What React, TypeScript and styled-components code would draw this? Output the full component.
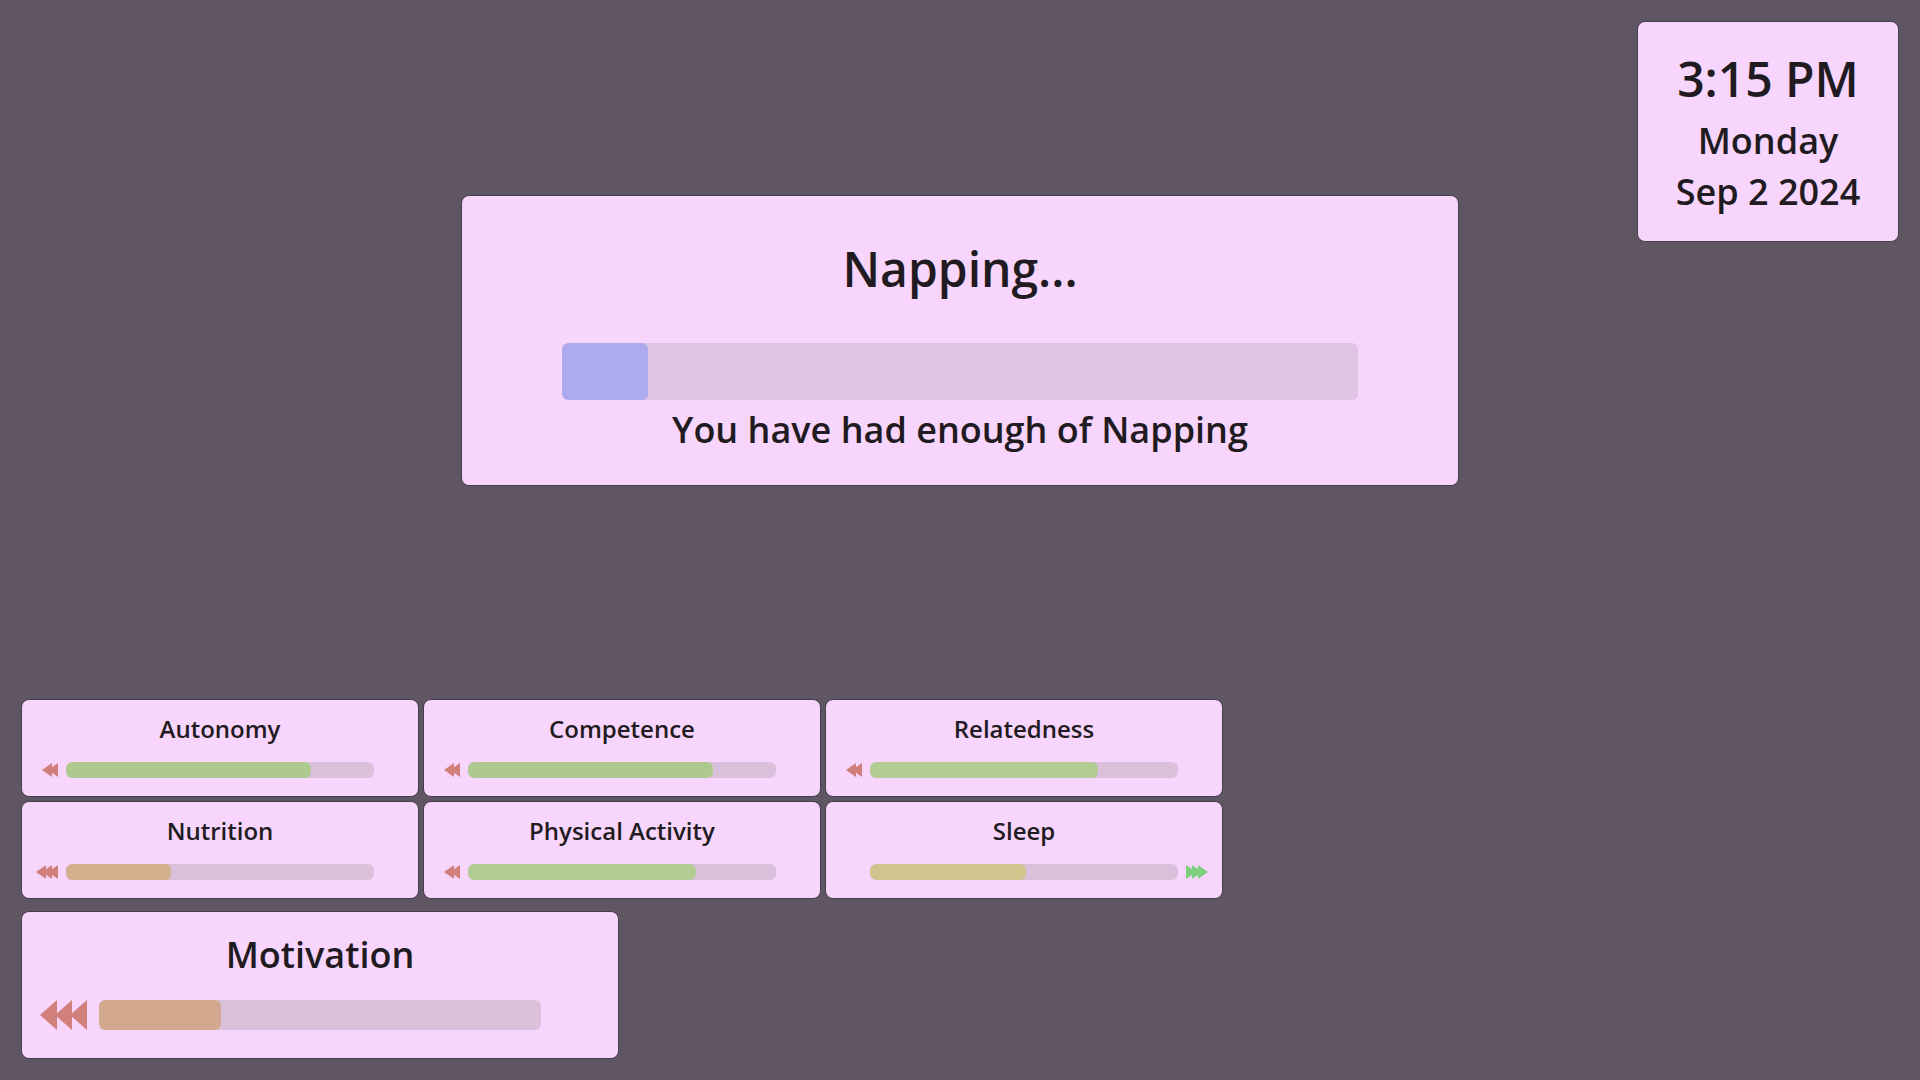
import React from "react";
import styled, { createGlobalStyle } from "styled-components";

const Global = createGlobalStyle`
  html, body {
    margin: 0;
    padding: 0;
    background: #5f5563;
  }
  body {
    font-family: "Open Sans", "Noto Sans", sans-serif;
    color: #1f1b20;
  }
  * { box-sizing: border-box; }
`;

const Page = styled.div`
  width: 1920px;
  height: 1080px;
  padding: 21px;
  display: flex;
  flex-direction: column;
  justify-content: space-between;
`;

const Top = styled.div`
  display: grid;
  grid-template-columns: 1fr 998px 1fr;
  align-items: start;
`;

const Panel = styled.div`
  background: #f7d5fc;
  border: 1px solid #463c49;
  border-radius: 8px;
  text-align: center;
`;

const Clock = styled(Panel)`
  grid-column: 3;
  justify-self: end;
  width: 262px;
  padding: 24px 0 24px;
  display: flex;
  flex-direction: column;
  gap: 4px;
`;

const Time = styled.div`
  font-size: 48px;
  font-weight: 600;
  line-height: 1.362;
`;

const DateLines = styled.div`
  font-size: 36px;
  font-weight: 600;
  line-height: 51px;
`;

const Activity = styled(Panel)`
  grid-column: 2;
  margin-top: 174px;
  padding: 40px 0 31px;
  display: flex;
  flex-direction: column;
  align-items: center;
`;

const ActivityTitle = styled.div`
  font-size: 48px;
  font-weight: 600;
  line-height: 1.362;
`;

const Track = styled.div<{ $w: number; $h: number; $bg?: string; $r?: number }>`
  width: ${(p) => p.$w}px;
  height: ${(p) => p.$h}px;
  background: ${(p) => p.$bg ?? "#dbc0dc"};
  border-radius: ${(p) => p.$r ?? 6}px;
  overflow: hidden;
  display: flex;
`;

const Fill = styled.div<{ $color: string }>`
  height: 100%;
  background: ${(p) => p.$color};
  border-radius: inherit;
`;

const ActivityBar = styled.div`
  margin-top: 42px;
`;

const ActivityNote = styled.div`
  margin-top: 5px;
  font-size: 36px;
  font-weight: 600;
  line-height: 1.362;
`;

const Bottom = styled.div`
  display: flex;
  flex-direction: column;
  gap: 12px;
`;

const StatGrid = styled.div`
  display: grid;
  grid-template-columns: repeat(3, 398px);
  grid-auto-rows: 98px;
  gap: 4px;
`;

const StatCard = styled(Panel)`
  padding-top: 13px;
  display: flex;
  flex-direction: column;
  align-items: stretch;
`;

const StatTitle = styled.div`
  font-size: 24px;
  font-weight: 600;
  line-height: 1.362;
`;

const BarRow = styled.div<{ $bar: number; $gap: number; $mt: number }>`
  margin-top: ${(p) => p.$mt}px;
  display: grid;
  grid-template-columns: 1fr ${(p) => p.$bar}px 1fr;
  column-gap: ${(p) => p.$gap}px;
  align-items: center;
`;

const Left = styled.div`
  display: flex;
  justify-content: flex-end;
`;

const Right = styled.div`
  display: flex;
  justify-content: flex-start;
`;

const MotivationCard = styled(Panel)`
  width: 598px;
  height: 148px;
  padding-top: 18px;
`;

const MotivationTitle = styled.div`
  font-size: 36px;
  font-weight: 600;
  line-height: 1.362;
`;

type ArrowsProps = { count: number; dir: "left" | "right"; w: number; h: number; step: number; color: string };

const Arrows = ({ count, dir, w, h, step, color }: ArrowsProps) => {
  const total = w + step * (count - 1);
  const tris = Array.from({ length: count }, (_, i) => {
    const x0 = i * step;
    const pts =
      dir === "left"
        ? `${x0},${h / 2} ${x0 + w},0 ${x0 + w},${h}`
        : `${x0 + w},${h / 2} ${x0},0 ${x0},${h}`;
    return <polygon key={i} points={pts} fill={color} />;
  });
  return (
    <svg width={total} height={h} viewBox={`0 0 ${total} ${h}`} style={{ display: "block" }}>
      {tris}
    </svg>
  );
};

const RED = "#d07f7a";
const GREEN = "#7dcf7a";

type Stat = { name: string; value: number; color: string; trend: number };

const stats: Stat[] = [
  { name: "Autonomy", value: 79.5, color: "#adc98f", trend: -2 },
  { name: "Competence", value: 79.5, color: "#adc98f", trend: -2 },
  { name: "Relatedness", value: 74, color: "#b3cc94", trend: -2 },
  { name: "Nutrition", value: 34, color: "#d3af8d", trend: -3 },
  { name: "Physical Activity", value: 74, color: "#b3cc94", trend: -2 },
  { name: "Sleep", value: 50.6, color: "#d1c58f", trend: 3 },
];

const SmallArrows = ({ n, dir }: { n: number; dir: "left" | "right" }) => (
  <Arrows count={n} dir={dir} w={10} h={14} step={6} color={dir === "left" ? RED : GREEN} />
);

export default function App() {
  return (
    <>
      <Global />
      <Page>
        <Top>
          <Activity>
            <ActivityTitle>Napping...</ActivityTitle>
            <ActivityBar>
              <Track $w={796} $h={57} $bg="#dfc4e3" $r={6}>
                <Fill $color="#aeaaf0" style={{ width: "10.8%" }} />
              </Track>
            </ActivityBar>
            <ActivityNote>You have had enough of Napping</ActivityNote>
          </Activity>
          <Clock>
            <Time>3:15 PM</Time>
            <DateLines>
              Monday
              <br />
              Sep 2 2024
            </DateLines>
          </Clock>
        </Top>
        <Bottom>
          <StatGrid>
            {stats.map((s) => (
              <StatCard key={s.name}>
                <StatTitle>{s.name}</StatTitle>
                <BarRow $bar={308} $gap={8} $mt={16}>
                  <Left>{s.trend < 0 && <SmallArrows n={-s.trend} dir="left" />}</Left>
                  <Track $w={308} $h={16} $r={6}>
                    <Fill $color={s.color} style={{ width: `${s.value}%` }} />
                  </Track>
                  <Right>{s.trend > 0 && <SmallArrows n={s.trend} dir="right" />}</Right>
                </BarRow>
              </StatCard>
            ))}
          </StatGrid>
          <MotivationCard>
            <MotivationTitle>Motivation</MotivationTitle>
            <BarRow $bar={442} $gap={12} $mt={21}>
              <Left>
                <Arrows count={3} dir="left" w={17} h={30} step={15} color={RED} />
              </Left>
              <Track $w={442} $h={30} $r={6}>
                <Fill $color="#d2a88e" style={{ width: "27.6%" }} />
              </Track>
              <Right />
            </BarRow>
          </MotivationCard>
        </Bottom>
      </Page>
    </>
  );
}
